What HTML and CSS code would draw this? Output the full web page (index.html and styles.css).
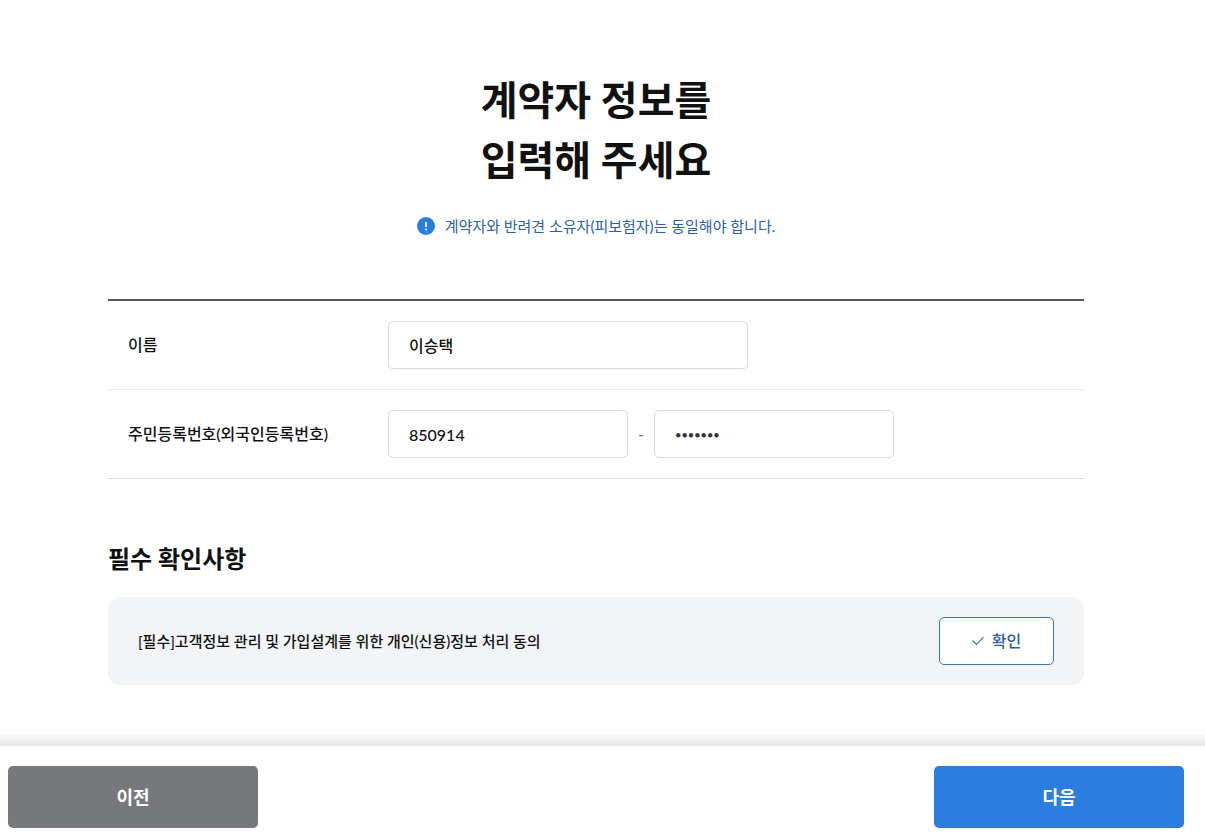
FILE: index.html
```html
<!DOCTYPE html>
<html lang="ko">
<head>
    <meta charset="UTF-8">
    <meta name="viewport" content="width=device-width, initial-scale=1.0">
    <title>계약자 정보</title>
    <link rel="stylesheet" href="styles.css">
</head>
<body>
    <form class="page">
        <main class="content">
            <h1>계약자 정보를<br>입력해 주세요</h1>
            <p class="notice">
                <svg class="notice-icon" viewBox="0 0 18 18" aria-hidden="true">
                    <circle cx="9" cy="9" r="9" fill="#2b7de0"/>
                    <path d="M9 5v5" stroke="#fff" stroke-width="1.8"/>
                    <circle cx="9" cy="12.5" r="1" fill="#fff"/>
                </svg>
                계약자와 반려견 소유자(피보험자)는 동일해야 합니다.
            </p>

            <div class="form-table">
                <div class="form-row">
                    <label for="name">이름</label>
                    <input type="text" id="name" class="input-name" value="이승택">
                </div>
                <div class="form-row">
                    <label for="idFront">주민등록번호(외국인등록번호)</label>
                    <div class="id-group">
                        <input type="text" id="idFront" value="850914">
                        <span class="dash">-</span>
                        <input type="password" id="idBack" class="input-password" value="1234567" aria-label="주민등록번호 뒷자리">
                    </div>
                </div>
            </div>

            <h2>필수 확인사항</h2>
            <div class="agree-box">
                <p>[필수]고객정보 관리 및 가입설계를 위한 개인(신용)정보 처리 동의</p>
                <button type="button" class="btn-confirm">
                    <svg class="check-icon" viewBox="0 0 12 10" aria-hidden="true">
                        <path d="M.5 4.5l4 4 7-7.3" fill="none" stroke="#2f6fb5" stroke-width="1.1"/>
                    </svg>
                    확인
                </button>
            </div>
        </main>

        <footer class="bottom-bar">
            <button type="button" class="btn btn-prev">이전</button>
            <button type="button" class="btn btn-next">다음</button>
        </footer>
    </form>
</body>
</html>
```

FILE: styles.css
```css
* {
    box-sizing: border-box;
    margin: 0;
    padding: 0;
}

body {
    font-family: Lato, "Noto Sans CJK KR", sans-serif;
    font-size: 15px;
    font-weight: 500;
    line-height: 24px;
    color: #111;
    background-color: #fff;
}

button,
input {
    font: inherit;
    color: inherit;
}

.page {
    display: flex;
    flex-direction: column;
    min-height: 100vh;
}

.content {
    flex: 1;
    width: 100%;
    max-width: 1192px;
    padding: 70px 108px 40px;
}

h1 {
    font-size: 40px;
    font-weight: 700;
    line-height: 60px;
    text-align: center;
}

.notice {
    display: flex;
    justify-content: center;
    align-items: center;
    gap: 10px;
    margin-top: 24px;
    font-weight: 400;
    color: #2b60a8;
}

.notice-icon {
    width: 18px;
    height: 18px;
}

.form-table {
    margin-top: 61px;
    border-top: 2px solid #555;
    font-size: 16px;
}

.form-row {
    display: flex;
    align-items: center;
    padding: 20px;
    border-bottom: 1px solid #e8e8e8;
}

.form-row:last-child {
    border-bottom-color: #d8d8d8;
}

.form-row label {
    width: 260px;
}

.form-row input {
    width: 240px;
    height: 48px;
    padding: 0 20px;
    border: 1px solid #d8d8d8;
    border-radius: 5px;
    background-color: #fff;
}

.form-row .input-name {
    width: 360px;
}

.form-row .input-password {
    font-size: 11px;
    color: #333;
}

.id-group {
    display: flex;
    align-items: center;
}

.dash {
    width: 26px;
    text-align: center;
    color: #777;
}

h2 {
    margin-top: 62px;
    font-size: 24px;
    font-weight: 700;
    line-height: 36px;
}

.agree-box {
    display: flex;
    justify-content: space-between;
    align-items: center;
    margin-top: 20px;
    padding: 20px 30px;
    border-radius: 12px;
    background-color: #f2f4f6;
}

.btn-confirm {
    display: flex;
    justify-content: center;
    align-items: center;
    gap: 8px;
    width: 115px;
    height: 48px;
    border: 1px solid #3a78b8;
    border-radius: 5px;
    background-color: #fff;
    font-size: 16px;
    color: #2b60a8;
    cursor: pointer;
}

.check-icon {
    width: 12px;
    height: 10px;
}

/* The top 14px of the bar is the shade above the buttons */
.bottom-bar {
    display: flex;
    justify-content: space-between;
    padding: 34px 21px 9px 8px;
    background: linear-gradient(#fff, #e5e5e5 14px, #fff 14px);
}

.btn {
    width: 250px;
    height: 62px;
    border: none;
    border-radius: 5px;
    font-size: 18px;
    font-weight: 700;
    color: #fff;
    cursor: pointer;
}

.btn-prev {
    background-color: #77787b;
}

.btn-next {
    background-color: #2b7de0;
}
```
